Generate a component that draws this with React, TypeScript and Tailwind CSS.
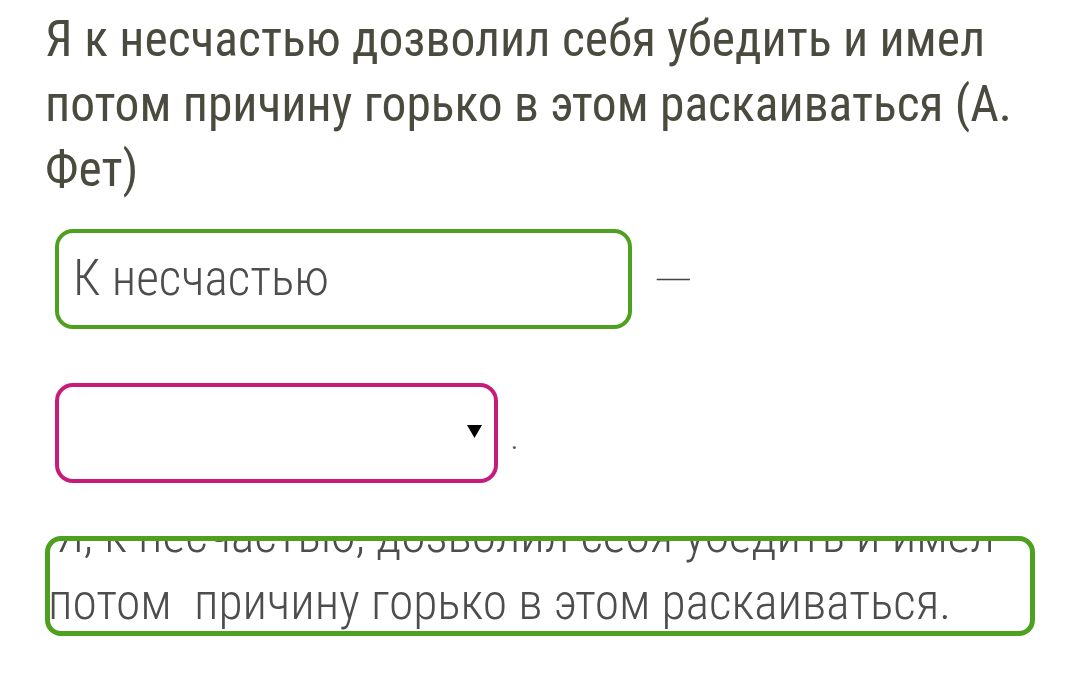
export default function App() {
  return (
    <div
      className="w-[1068px] h-[691px] bg-white overflow-hidden"
      style={{ fontFamily: '"Roboto Condensed", Roboto, "Liberation Sans", sans-serif' }}
    >
      <div className="pl-[45px] pr-[40px] pt-[7px]">
        <h1 className="text-[49.5px] leading-[65px] font-normal text-[#4a4a3e]">
          Я к несчастью дозволил себя убедить и имел потом причину горько в этом раскаиваться (А.
          Фет)
        </h1>

        <div className="mt-[27px] ml-[10px] flex items-center gap-[21px]">
          <div className="w-[577px] h-[100px] border-[4px] border-[#4ea11e] rounded-[18px] flex items-center pl-[14px]">
            <span className="text-[49.5px] font-light text-[#4d4d4d] leading-none">К несчастью</span>
          </div>
          <span className="text-[60px] font-thin text-[#444] leading-none mt-[4px]">—</span>
        </div>

        <div className="mt-[54px] ml-[10px] flex items-end gap-[13px]">
          <div className="w-[443px] h-[100px] border-[4px] border-[#c81a7a] rounded-[18px] flex items-center justify-end pr-[12px]">
            <svg width="15" height="15" viewBox="0 0 15 15" className="-mt-[4px]">
              <path d="M0 1 L15 1 L7.5 14 Z" fill="#000" />
            </svg>
          </div>
          <span className="text-[26px] text-[#555] leading-none mb-[30px]">.</span>
        </div>

        <div className="mt-[53px] w-[990px] h-[100px] border-[5px] border-[#4ea11e] rounded-[16px] overflow-hidden">
          <div className="-mt-[39px] -ml-[2px] text-[49.5px] leading-[67px] font-light text-[#4d4d4d] whitespace-pre">
            <div className="pl-[9px]">Я, к несчастью, дозволил себя убедить и имел</div>
            <div>потом  причину горько в этом раскаиваться.</div>
          </div>
        </div>
      </div>
    </div>
  );
}
